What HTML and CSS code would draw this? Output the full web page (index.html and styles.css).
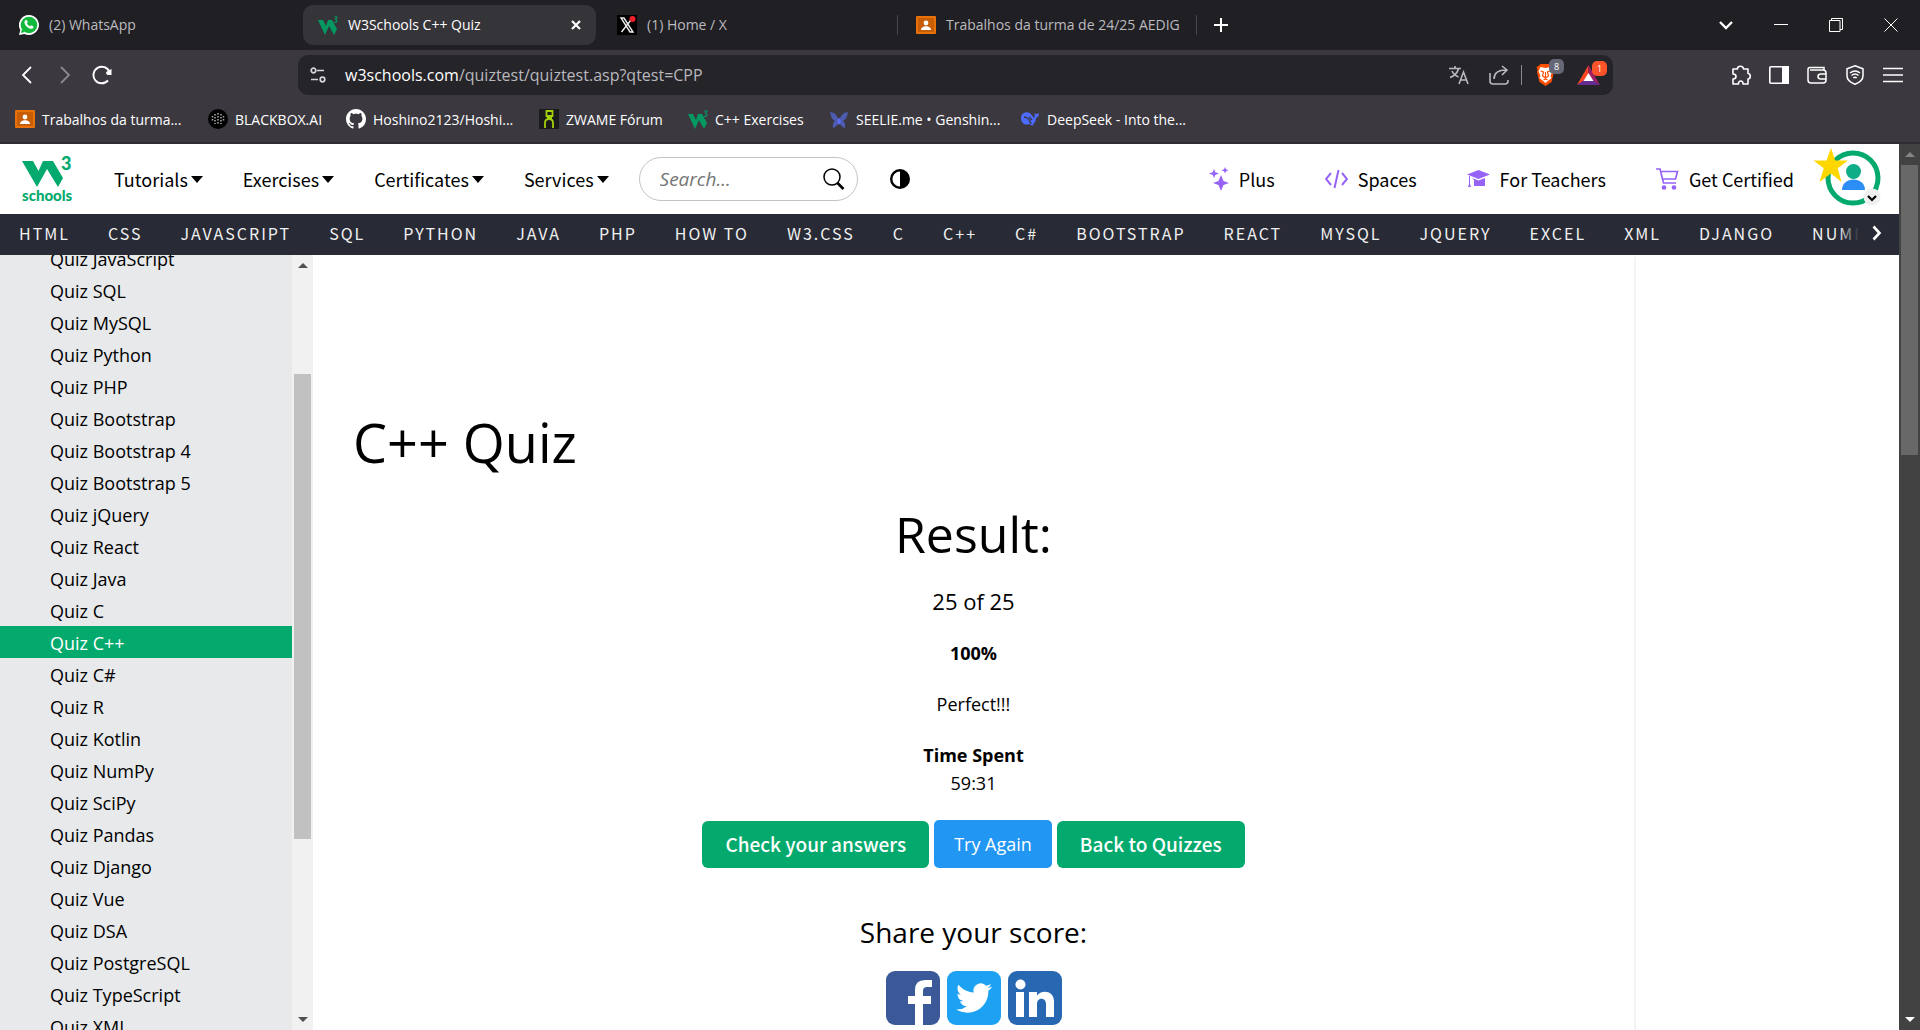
FILE: index.html
```html
<!DOCTYPE html>
<html lang="en">
<head>
<meta charset="utf-8">
<title>W3Schools C++ Quiz</title>
<link rel="stylesheet" href="styles.css">
</head>
<body>
<svg class="defs" width="0" height="0" aria-hidden="true">
  <symbol id="i-w3" viewBox="0 0 20 20"><path fill="#059862" d="M0 5h5l3 6 2-6h4l5 9-3 6-5-9-4 9z"/><path fill="none" stroke="#059862" stroke-width="1.200" d="M16 2h3l-1.500 2.500q2 .5 1.200 2.200-1 1.300-2.700.3"/></symbol>
  <symbol id="i-class" viewBox="0 0 20 20"><rect width="20" height="18" y="1" rx="1" fill="#e8710a"/><rect x="2" y="3" width="16" height="14" fill="#c75d05"/><circle cx="10" cy="8" r="2.4" fill="#fff"/><path d="M5 15c0-5 10-5 10 0z" fill="#fff"/></symbol>
</svg>

<header class="browser">
  <div class="tabstrip">
    <div class="tabs">
      <div class="tab">
        <svg class="fav" viewBox="0 0 20 20"><path fill="#fff" d="M10 0a10 10 0 1 1-4.600 18.900L0 20l1.300-5A10 10 0 0 1 10 0z"/><circle cx="10" cy="10" r="8.300" fill="#12b83b"/><path d="M2 18l1-4 3 3z" fill="#12b83b"/><path fill="#fff" d="M6.500 5.200c.8-.6 1.400-.3 1.700.6l.6 1.500-.8 1.200c.7 1.400 1.700 2.200 3 2.800l1.200-1.100 2 1c.5.300.2 1.700-.6 2.200-1.500 1-3.900 0-5.700-1.700C6 10 5.100 7.600 5.500 6.400z"/></svg>
        <span>(2) WhatsApp</span>
      </div>
      <div class="tab active">
        <svg class="fav"><use href="#i-w3"/></svg>
        <span>W3Schools C++ Quiz</span>
        <button class="close" aria-label="Close tab"><svg width="12" height="12" viewBox="0 0 12 12"><path d="M2 2l8 8M10 2l-8 8" stroke="#fff" stroke-width="2.200"/></svg></button>
      </div>
      <div class="tab line">
        <svg class="fav" viewBox="0 0 20 20"><rect width="20" height="20" fill="#000"/><path d="M4 3h3l9 14h-3zM15.500 3L4.500 17" fill="none" stroke="#eee" stroke-width="1.400"/><circle cx="15.500" cy="4" r="3" fill="#f4212e"/></svg>
        <span>(1) Home / X</span>
      </div>
      <div class="tab line">
        <svg class="fav"><use href="#i-class"/></svg>
        <span>Trabalhos da turma de 24/25 AEDIG</span>
      </div>
    </div>
    <button class="newtab" aria-label="New tab"><svg width="14" height="14" viewBox="0 0 14 14"><path d="M7 0v14M0 7h14" stroke="#fff" stroke-width="2"/></svg></button>
    <div class="winctl">
      <button aria-label="Search tabs"><svg width="14" height="10" viewBox="0 0 14 10"><path d="M1 2l6 6 6-6" fill="none" stroke="#fff" stroke-width="2.400"/></svg></button>
      <button aria-label="Minimize"><svg width="14" height="14" viewBox="0 0 14 14"><path d="M0 6.500h14" stroke="#fff"/></svg></button>
      <button aria-label="Restore"><svg width="14" height="14" viewBox="0 0 14 14"><path d="M.5 2.500h10.500v11H.5zM2.500 2.500v-2h11v11h-2.500" fill="none" stroke="#fff"/></svg></button>
      <button aria-label="Close window"><svg width="14" height="14" viewBox="0 0 14 14"><path d="M.5.500l13 13M13.500.500l-13 13" stroke="#fff"/></svg></button>
    </div>
  </div>

  <div class="toolbar">
    <div class="navbtns">
      <button aria-label="Back"><svg width="20" height="20" viewBox="0 0 20 20"><path d="M13 2L5 10l8 8" fill="none" stroke="#fff" stroke-width="1.800"/></svg></button>
      <button aria-label="Forward"><svg width="20" height="20" viewBox="0 0 20 20"><path d="M6 2l8 8-8 8" fill="none" stroke="#8a898d" stroke-width="1.800"/></svg></button>
      <button aria-label="Reload"><svg width="20" height="20" viewBox="0 0 20 20"><path d="M16 15.500A8.300 8.300 0 1 1 17.500 7" fill="none" stroke="#fff" stroke-width="1.900"/><path d="M19.500 4v6h-4c-2-1-2-3 0-4z" fill="#fff"/></svg></button>
    </div>
    <div class="address">
      <svg width="16" height="16" viewBox="0 0 16 16" fill="none" stroke="#d6d5d9" stroke-width="1.700"><circle cx="3.500" cy="3.500" r="2.300"/><path d="M7 3.500h7M1 12.500h7"/><circle cx="12.500" cy="12.500" r="2.300"/></svg>
      <span class="url"><span class="host">w3schools.com</span>/quiztest/quiztest.asp?qtest=CPP</span>
      <div class="addricons">
        <svg width="20" height="20" viewBox="0 0 20 20" fill="none" stroke="#b9b8bd" stroke-width="1.600"><path d="M0 3.500h12M6 1v2.500M9.500 3.500C8.500 8 5 11 1 12.500M3 6c1.500 3.500 4 5 6.500 6M10 19l4.500-12L19 19M11.500 15h6"/></svg>
        <svg width="20" height="20" viewBox="0 0 20 20" fill="none" stroke="#b9b8bd" stroke-width="1.600"><path d="M1 8v8q0 3 3 3h12q3 0 3-3v-1M5 14c0-6 4-9 12-9M13 1l5 4-5 5"/></svg>
        <i class="sep"></i>
        <span class="shield"><svg width="23" height="24" viewBox="0 0 20 24"><path d="M5 1h10l2 2 2 1-1 3 .5 2-2.500 10L10 23l-6-4L1.500 9 2 7 1 4l2-1z" fill="#ff5000"/><path d="M5 4l5 1 5-1 2 4-2 5 1 2-6 5-6-5 1-2-2-5z" fill="#fff"/><path d="M5 8l3 1-1 4 3 2 3-2-1-4 3-1M8 17l2-1 2 1M10 9v5" fill="none" stroke="#ff5000" stroke-width="1.200"/></svg><b class="pill grey">8</b></span>
        <span class="shield"><svg width="23" height="20" viewBox="0 0 23 20"><path d="M11.500 0L0 20l11.500-7z" fill="#ff4724"/><path d="M11.500 0L23 20l-11.500-7z" fill="#9e1f63"/><path d="M0 20l11.500-8L23 20z" fill="#662d91"/><path d="M11.500 8l5 8h-10z" fill="#fff"/></svg><b class="pill red">1</b></span>
      </div>
    </div>
    <div class="tools">
      <svg width="20" height="20" viewBox="0 0 20 20" fill="none" stroke="#fff" stroke-width="1.600"><path d="M2 4h4.500c-.5-3.500 6-4 6 0H17v4.500c3 0 3 5.500 0 5.500v5h-5c.5-4-5-4-4.500 0H2v-5c4 0 4-5 0-5z" stroke-linejoin="round"/></svg>
      <svg width="20" height="18" viewBox="0 0 20 18"><rect x=".8" y=".8" width="18.400" height="16.400" rx="1" fill="none" stroke="#fff" stroke-width="1.600"/><path d="M13 0h7v18h-7z" fill="#fff"/></svg>
      <svg width="20" height="18" viewBox="0 0 20 18" fill="none" stroke="#fff" stroke-width="1.500"><path d="M17 4V1.500H3q-2 0-2 2V14q0 3 3 3h12q3 0 3-3V7q0-3-3-3H3"/><path d="M19 8h-5q-3 0-3 2.500T14 13h5"/></svg>
      <svg width="20" height="20" viewBox="0 0 20 20" fill="none" stroke="#fff" stroke-width="1.500"><path d="M10 .8l8 3v7c0 4-4 7-8 8.500-4-1.500-8-4.500-8-8.500v-7z"/><path d="M5 8c3-2.500 7-2.500 10 0M6.500 10.500c2-1.700 5-1.700 7 0M8.300 13c1-.9 2.400-.9 3.400 0"/></svg>
      <svg width="20" height="16" viewBox="0 0 20 16"><path d="M0 1.500h20M0 8h20M0 14.500h20" stroke="#fff" stroke-width="1.700"/></svg>
    </div>
  </div>

  <nav class="bookmarks">
    <a href="#"><svg class="fav"><use href="#i-class"/></svg>Trabalhos da turma...</a>
    <a href="#"><svg class="fav" viewBox="0 0 20 20"><circle cx="10" cy="10" r="10" fill="#000"/><g fill="none" stroke="#aaa" stroke-width="1.500" stroke-dasharray="1.500 1.500"><path d="M10 4v12M7 5v10M13 5v10M4.500 7v6M15.500 7v6"/></g></svg>BLACKBOX.AI</a>
    <a href="#"><svg class="fav" viewBox="0 0 16 16"><path fill="#fff" d="M8 0C3.580 0 0 3.580 0 8c0 3.540 2.290 6.530 5.470 7.590.4.070.55-.17.55-.38 0-.19-.01-.82-.01-1.490-2.010.37-2.530-.49-2.690-.94-.09-.23-.48-.94-.82-1.130-.28-.15-.68-.52-.01-.53.630-.01 1.080.58 1.230.82.720 1.210 1.870.87 2.330.66.070-.52.280-.87.510-1.070-1.780-.2-3.640-.89-3.640-3.950 0-.87.310-1.590.82-2.150-.08-.2-.36-1.020.08-2.120 0 0 .67-.21 2.200.82.640-.18 1.320-.27 2-.27s1.360.09 2 .27c1.530-1.040 2.200-.82 2.200-.82.440 1.100.16 1.920.08 2.120.51.560.82 1.270.82 2.150 0 3.070-1.870 3.750-3.650 3.950.29.250.54.730.54 1.480 0 1.070-.01 1.930-.01 2.200 0 .21.150.46.550.38A8.010 8.010 0 0 0 16 8c0-4.420-3.580-8-8-8z"/></svg>Hoshino2123/Hoshi...</a>
    <a href="#"><svg class="fav" viewBox="0 0 20 20"><rect width="20" height="20" fill="#1b1b1b"/><path d="M7.500 2h6v5h-6zM8 9h5M6 19v-5q0-4 4-4t4 4v5" fill="none" stroke="#a4cf0c" stroke-width="1.800"/></svg>ZWAME Fórum</a>
    <a href="#"><svg class="fav"><use href="#i-w3"/></svg>C++ Exercises</a>
    <a href="#"><svg class="fav" viewBox="0 0 20 20"><path fill="#4d5bb0" d="M1 3q5 0 8 6h2q3-6 8-6-1 7-5 9 3 2 2 7-4-1-6-6-2 5-6 6-1-5 2-7-4-2-5-9z"/><path d="M9 10h2l1 3-2 3-2-3z" fill="#5b6ef0"/></svg>SEELIE.me • Genshin...</a>
    <a href="#"><svg class="fav" viewBox="0 0 20 20"><path fill="#4d6bfe" d="M1 9c0-5 5-7 9-5 1 2 3 3 4 5l1-3-1-2 2 1q2 0 3-1 0 4-3 5 0 4-3 6l1 1q-3 1-5-1C4 17 1 13 1 9z"/><path d="M4 8c3 0 6 3 7 7M9 8l3 3" stroke="#3b393f" stroke-width="1.500" fill="none"/></svg>DeepSeek - Into the...</a>
  </nav>
</header>

<div class="viewport">
  <div class="page">
    <header class="site">
      <a class="logo" href="#" aria-label="Home">
        <svg width="50" height="32" viewBox="0 0 50 32"><path d="M0 5h11l5.500 10L21 5h10l10 17-5 9-11-18-10 18z" fill="#04aa6d"/><text x="39" y="14" font-family="Lato" font-weight="900" font-size="18" fill="#04aa6d">3</text></svg>
        <span>schools</span>
      </a>
      <nav class="menus">
        <a href="#">Tutorials<i class="caret"></i></a>
        <a href="#">Exercises<i class="caret"></i></a>
        <a href="#">Certificates<i class="caret"></i></a>
        <a href="#">Services<i class="caret"></i></a>
      </nav>
      <form class="search">
        <input type="text" placeholder="Search..." aria-label="Search">
        <button type="button" aria-label="Go"><svg width="22" height="22" viewBox="0 0 22 22"><circle cx="9" cy="9" r="8" fill="none" stroke="#000" stroke-width="1.500"/><path d="M14.500 15l6 6" stroke="#000" stroke-width="2.600"/></svg></button>
      </form>
      <button class="theme" aria-label="Toggle dark mode"><svg width="20" height="20" viewBox="0 0 20 20"><circle cx="10" cy="10" r="8.800" fill="#fff" stroke="#000" stroke-width="2.400"/><path d="M10 1a9 9 0 0 1 0 18z"/></svg></button>
      <nav class="links">
        <a href="#"><svg width="20" height="24" viewBox="0 0 20 24" fill="#9763f6"><path d="M12 8l2.500 6L20 16l-5.500 2L12 24l-2.500-6L4 16l5.500-2zM5 2l1.300 3.200L10 6.500 6.300 8 5 11 3.700 8 0 6.500l3.700-1.300zM16 0l1 2.200 2.500 1L17 4.300 16 6.500l-1-2.200-2.500-1L15 2.200z"/></svg>Plus</a>
        <a href="#"><svg width="23" height="20" viewBox="0 0 23 20" fill="none" stroke="#9763f6" stroke-width="2"><path d="M6 4L1 10l5 6M17 4l5 6-5 6M13.500 1l-4 18"/></svg>Spaces</a>
        <a href="#"><svg width="23" height="20" viewBox="0 0 23 20" fill="#9763f6"><path d="M11.500 1L23 5.500 11.500 10 0 5.500zM5 9l6.500 2.500L18 9v8H7v-6zM2 6v9l-1 3h3l-1-3V6z"/></svg>For Teachers</a>
        <a href="#"><svg width="23" height="22" viewBox="0 0 23 22" fill="none" stroke="#9763f6" stroke-width="1.700"><path d="M0 1h4l3.500 14H20M4.500 3.500h17L19.500 11H6.500"/><circle cx="8" cy="19.500" r="1.500" fill="#9763f6"/><circle cx="18" cy="19.500" r="1.500" fill="#9763f6"/></svg>Get Certified</a>
      </nav>
      <button class="avatar" aria-label="Account"><svg width="70" height="62" viewBox="0 0 70 62"><circle cx="40" cy="30" r="25" fill="#fff" stroke="#04aa6d" stroke-width="5"/><circle cx="40.500" cy="23.500" r="7.500" fill="#0ead87"/><path d="M29 42c0-14 23-14 23 0z" fill="#2c8df4"/><path fill="#ffd700" d="M18 0l4.200 12.500H35L24.800 20.300 28.500 34 18 25.500 6.500 34l4.200-13.700L.5 12.500h13z"/><circle cx="59" cy="49" r="8.500" fill="#efefef"/><path d="M55 48l4 4 4-4" fill="none" stroke="#000" stroke-width="2.200"/></svg></button>
    </header>

    <nav class="topics">
      <a href="#">HTML</a><a href="#">CSS</a><a href="#">JAVASCRIPT</a><a href="#">SQL</a><a href="#">PYTHON</a><a href="#">JAVA</a><a href="#">PHP</a><a href="#">HOW TO</a><a href="#">W3.CSS</a><a href="#">C</a><a href="#">C++</a><a href="#">C#</a><a href="#">BOOTSTRAP</a><a href="#">REACT</a><a href="#">MYSQL</a><a href="#">JQUERY</a><a href="#">EXCEL</a><a href="#">XML</a><a href="#">DJANGO</a><a href="#">NUMPY</a>
      <button class="more" aria-label="Scroll right"><svg width="10" height="16" viewBox="0 0 10 16"><path d="M1.500 1.500L7.500 8l-6 6.500" fill="none" stroke="#fff" stroke-width="2.600"/></svg></button>
    </nav>

    <div class="columns">
      <aside class="sidebar">
        <nav class="quizzes">
          <a href="#">Quiz JavaScript</a><a href="#">Quiz SQL</a><a href="#">Quiz MySQL</a><a href="#">Quiz Python</a><a href="#">Quiz PHP</a><a href="#">Quiz Bootstrap</a><a href="#">Quiz Bootstrap 4</a><a href="#">Quiz Bootstrap 5</a><a href="#">Quiz jQuery</a><a href="#">Quiz React</a><a href="#">Quiz Java</a><a href="#">Quiz C</a><a href="#" class="current">Quiz C++</a><a href="#">Quiz C#</a><a href="#">Quiz R</a><a href="#">Quiz Kotlin</a><a href="#">Quiz NumPy</a><a href="#">Quiz SciPy</a><a href="#">Quiz Pandas</a><a href="#">Quiz Django</a><a href="#">Quiz Vue</a><a href="#">Quiz DSA</a><a href="#">Quiz PostgreSQL</a><a href="#">Quiz TypeScript</a><a href="#">Quiz XML</a>
        </nav>
        <div class="bar light"><i class="up"></i><div class="track"><div class="thumb"></div></div><i class="down"></i></div>
      </aside>
      <main>
        <h1>C++ Quiz</h1>
        <section class="result">
          <h2>Result:</h2>
          <p class="score">25 of 25</p>
          <p><b>100%</b></p>
          <p>Perfect!!!</p>
          <p class="time"><b>Time Spent</b><br>59:31</p>
          <div class="actions">
            <button class="btn">Check your answers</button>
            <button class="btn blue">Try Again</button>
            <button class="btn">Back to Quizzes</button>
          </div>
          <h3>Share your score:</h3>
          <div class="share">
            <a href="#" aria-label="Facebook"><svg width="54" height="54" viewBox="0 0 54 54"><rect width="54" height="54" rx="9" fill="#3b5998"/><path fill="#fff" d="M29 54V33h-7v-8h7v-6q0-10 10-10h7v7h-5q-4 0-4 4v5h8v8h-8v21z"/></svg></a>
            <a href="#" aria-label="Twitter"><svg width="54" height="54" viewBox="0 0 54 54"><rect width="54" height="54" rx="9" fill="#1da1f2"/><g transform="translate(9 9) scale(1.500)"><path fill="#fff" d="M23.950 4.570a10 10 0 0 1-2.820.77 4.960 4.960 0 0 0 2.160-2.720c-.95.550-2 .950-3.130 1.180a4.920 4.920 0 0 0-8.380 4.480C7.690 8.100 4.070 6.130 1.640 3.160a4.820 4.820 0 0 0-.67 2.480c0 1.710.87 3.210 2.190 4.100a4.900 4.900 0 0 1-2.230-.62v.06a4.920 4.920 0 0 0 3.950 4.830 5 5 0 0 1-2.210.08 4.940 4.940 0 0 0 4.600 3.420A9.870 9.870 0 0 1 0 19.540a13.940 13.940 0 0 0 7.550 2.210c9.050 0 14-7.500 14-13.980 0-.21 0-.42-.02-.63a9.940 9.940 0 0 0 2.460-2.550z"/></g></svg></a>
            <a href="#" aria-label="LinkedIn"><svg width="54" height="54" viewBox="0 0 54 54"><rect width="54" height="54" rx="9" fill="#2867b2"/><circle cx="12.500" cy="13.500" r="5" fill="#fff"/><path fill="#fff" d="M8 21h8v25H8zM21 21h8v3.500c4-6 17-5.500 17 6V46h-8V33c0-7-9-7-9 0v13h-8z"/></svg></a>
          </div>
        </section>
      </main>
      <div class="rail"></div>
    </div>
  </div>
  <div class="bar dark"><i class="up"></i><div class="track"><div class="thumb"></div></div><i class="down"></i></div>
</div>
</body>
</html>
```

FILE: styles.css
```css
* { box-sizing: border-box; }
body {
  margin: 0;
  height: 100vh;
  display: flex;
  flex-direction: column;
  overflow: hidden;
  font-family: "Open Sans", "Noto Sans", sans-serif;
  color: #000;
  background: #fff;
}
a { color: inherit; text-decoration: none; }
button { border: 0; padding: 0; background: none; font: inherit; color: inherit; display: flex; align-items: center; justify-content: center; }
svg { display: block; flex: none; }
.defs { position: absolute; }

/* browser chrome */
.browser { flex: none; background: #3b393f; color: #fff; font-size: 14px; border-bottom: 2px solid #2e2d32; }
.fav { width: 20px; height: 20px; }
.tabstrip { display: flex; align-items: center; height: 50px; background: #201f24; }
.tabs { display: grid; grid-template-columns: repeat(4, 293px); gap: 6px; padding-left: 4px; }
.tab { display: flex; align-items: center; gap: 10px; height: 40px; padding: 0 14px 1px 15px; color: #bcbbbf; white-space: nowrap; position: relative; }
.tab.active { background: #353439; border-radius: 10px; color: #fff; }
.tab.line::after { content: ""; position: absolute; right: -3px; top: 10px; height: 20px; width: 1px; background: #47464b; }
.close { margin-left: auto; }
.newtab { margin-left: 20px; }
.winctl { display: flex; gap: 41px; margin-left: auto; padding-right: 22px; }

.toolbar { display: flex; align-items: center; height: 50px; }
.navbtns { display: flex; gap: 17px; width: 298px; padding-left: 18px; }
.address { flex: 1; display: flex; align-items: center; gap: 19px; height: 40px; padding: 0 13px 0 12px; background: #252429; border-radius: 10px; font-size: 16px; color: #b9b8bd; }
.host { color: #fff; }
.addricons { display: flex; align-items: center; gap: 20px; margin-left: auto; }
.sep { width: 1px; height: 20px; margin: 0 -8px; background: #8a898d; }
.shield { position: relative; width: 23px; }
.pill { position: absolute; left: 15px; top: -4px; width: 15px; height: 15px; border-radius: 5px; font-size: 9px; line-height: 15px; font-weight: 400; text-align: center; color: #fff; }
.grey { background: #656775; }
.red { background: #fb542b; }
.tools { display: flex; align-items: center; gap: 18px; padding: 0 17px 0 118px; }

.bookmarks { display: grid; grid-template-columns: 193px 138px 193px 149px 141px 191px auto; height: 42px; padding: 0 15px 4px; align-items: center; }
.bookmarks a { display: flex; align-items: center; gap: 7px; white-space: nowrap; }

/* page */
.viewport { flex: 1; min-height: 0; display: flex; }
.page { flex: 1; min-width: 0; display: flex; flex-direction: column; }
.site { display: flex; align-items: center; height: 70px; flex: none; padding: 0 16px 0 22px; font-family: "Noto Sans CJK SC", sans-serif; font-size: 18px; line-height: 24px; }
.logo { width: 92px; color: #04aa6d; font: 900 15px/14px Lato, sans-serif; }
.menus { display: flex; gap: 40px; }
.menus a { display: flex; align-items: center; gap: 3px; }
.caret { border: 6px solid transparent; border-top: 7px solid #000; border-bottom: 0; }
.search { display: flex; align-items: center; width: 219px; height: 44px; margin-left: 30px; padding: 0 12px 0 20px; border: 1px solid #c4c4c4; border-radius: 22px; }
.search input { flex: 1; min-width: 0; border: 0; padding: 0; outline: 0; font: italic 19px/24px "Open Sans", sans-serif; }
.search input::placeholder { color: #757575; }
.theme { margin-left: 32px; }
.links { display: flex; gap: 50px; margin-left: auto; }
.links a { display: flex; align-items: center; gap: 10px; }
.avatar { margin-left: 19px; }

.topics { position: relative; display: flex; flex: none; height: 41px; padding: 0 0 3px 19px; gap: 38px; align-items: center; overflow: hidden; background: #282a35; color: #f1f1f1; font: 16px/24px "Noto Sans CJK SC", sans-serif; letter-spacing: 2px; white-space: nowrap; }
.more { position: absolute; right: 0; top: 0; width: 60px; height: 38px; padding-left: 15px; background: linear-gradient(90deg, #282a3500, #282a35 20px); }

.columns { flex: 1; min-height: 0; display: flex; }
.sidebar { display: flex; width: 313px; overflow: hidden; background: #e7e9eb; }
.quizzes { flex: 1; margin-top: -13px; font-size: 18px; line-height: 30px; }
.quizzes a { display: block; padding: 2px 0 0 50px; }
.quizzes .current { background: #04aa6d; color: #fff; }

.bar { display: flex; flex-direction: column; align-items: center; flex: none; width: 21px; padding: 8px 2px; }
.bar i { border: 5px solid transparent; }
.bar .up { border-top: 0; border-bottom-color: #505050; }
.bar .down { border-bottom: 0; border-top-color: #505050; }
.track { flex: 1; width: 100%; margin: 8px 0; }
.light { background: #f1f1f1; }
.light .thumb { margin-top: 98px; height: 465px; background: #c1c1c1; }
.dark { background: #424242; }
.dark .up { border-bottom-color: #868686; }
.dark .down { border-top-color: #fff; }
.dark .thumb { height: 290px; background: #686868; }

main { flex: 1; padding-top: 147px; }
h1, h2, h3, p { margin: 0; font-weight: 400; }
h1 { padding-left: 40px; font-size: 54px; line-height: 80px; }
.result { display: flex; flex-direction: column; align-items: center; text-align: center; font-size: 18px; line-height: 28px; }
h2 { margin-top: 12px; font-size: 50px; line-height: 80px; }
.result p { margin-bottom: 23px; }
.result .score { margin-top: 12px; font-size: 22px; line-height: 30px; }
.actions { display: flex; align-items: flex-end; gap: 5px; }
.btn { height: 47px; padding: 0 23px 2px; border-radius: 6px; background: #04aa6d; color: #fff; font: 500 19px/24px "Noto Sans CJK SC", sans-serif; }
.blue { height: 48px; padding: 0 20px; border-radius: 5px; background: #2196f3; font: 18px/24px "Open Sans", sans-serif; }
h3 { margin-top: 42px; font-size: 28px; line-height: 45px; }
.share { display: flex; gap: 7px; margin-top: 16px; }
.rail { width: 265px; margin-top: 2px; border-left: 2px solid #f4f4f4; }
```
